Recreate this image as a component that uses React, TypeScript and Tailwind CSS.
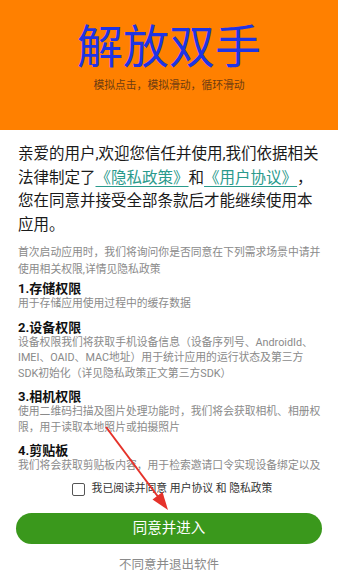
import React, { useState } from "react";

const sections = [
  {
    title: "1.存储权限",
    body: "用于存储应用使用过程中的缓存数据",
  },
  {
    title: "2.设备权限",
    body: "设备权限我们将获取手机设备信息（设备序列号、AndroidId、IMEI、OAID、MAC地址）用于统计应用的运行状态及第三方SDK初始化（详见隐私政策正文第三方SDK）",
  },
  {
    title: "3.相机权限",
    body: "使用二维码扫描及图片处理功能时，我们将会获取相机、相册权限，用于读取本地照片或拍摄照片",
  },
  {
    title: "4.剪贴板",
    body: "我们将会获取剪贴板内容，用于检索邀请口令实现设备绑定以及识别分享内容，不会上传或保存您的剪贴板信息",
  },
];

const App: React.FC = () => {
  const [checked, setChecked] = useState<boolean>(false);

  return (
    <div className="relative h-[574px] w-full overflow-hidden bg-white [text-spacing-trim:space-all] font-['Roboto','Noto_Sans_CJK_SC',sans-serif]">
      {/* header */}
      <div className="h-[130px] w-full bg-[#ff8000] flex flex-col items-center pt-[24px]">
        <h1 className="text-[46px] leading-[46px] text-[#1e34e6]">解放双手</h1>
        <p className="mt-[9px] text-[10.8px] leading-[14px] text-[#6e3c12]">
          模拟点击，模拟滑动，循环滑动
        </p>
      </div>

      {/* content */}
      <div className="h-[344px] overflow-hidden pl-[18px] pr-[15px] pt-[13px]">
        <p className="text-[15.5px] leading-[23.5px] text-[#1a1a1a]">
          亲爱的用户,欢迎您信任并使用,我们依据相关法律制定了
          <a className="text-[#2a9a8c] underline underline-offset-[3px]">《隐私政策》</a>
          和
          <a className="text-[#2a9a8c] underline underline-offset-[3px]">《用户协议》</a>
          ，您在同意并接受全部条款后才能继续使用本应用。
        </p>
        <p className="mt-[8px] text-[10.8px] leading-[16.5px] text-[#8a8a8a]">
          首次启动应用时，我们将询问你是否同意在下列需求场景中请并使用相关权限,详情见隐私政策
        </p>
        <div className="mt-[4px] flex flex-col gap-[9px]">
          {sections.map((s) => (
            <div key={s.title}>
              <h2 className="text-[13px] leading-[14px] font-bold text-[#111]">{s.title}</h2>
              <p className="text-[10.8px] leading-[15.5px] text-[#8a8a8a]">{s.body}</p>
            </div>
          ))}
        </div>
      </div>

      {/* bottom actions */}
      <div className="flex flex-col items-center pt-[7px]">
        <label className="flex items-center gap-[7px] h-[16px] pl-[6px]">
          <button
            onClick={() => setChecked(!checked)}
            className="w-[13px] h-[13px] border-[1.5px] border-[#555] rounded-[2px] bg-white"
          />
          <span className="text-[10.8px] leading-[16px] text-[#333]">
            我已阅读并同意 用户协议 和 隐私政策
          </span>
        </label>
        <button className="mt-[16px] w-[306px] h-[31px] rounded-full bg-[#3a981c] text-white text-[14.5px]">
          同意并进入
        </button>
        <p className="mt-[11px] text-[12.5px] leading-[20px] text-[#8a8a8a]">不同意并退出软件</p>
      </div>

      {/* red annotation arrow */}
      <svg
        className="absolute left-0 top-0 pointer-events-none"
        width="338"
        height="574"
        viewBox="0 0 338 574"
      >
        <line x1="106" y1="427" x2="159" y2="498" stroke="#e5322a" strokeWidth="2" />
        <polygon points="168,510 152.5,499.5 162.5,492" fill="#e5322a" />
      </svg>
    </div>
  );
};

export default App;
